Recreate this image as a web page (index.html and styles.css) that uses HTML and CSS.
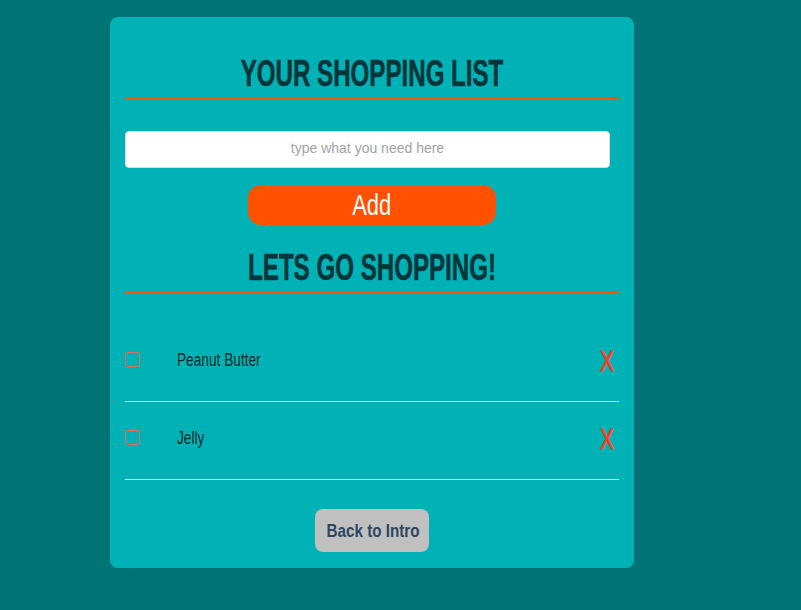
FILE: index.html
```html
<!DOCTYPE html>
<html>
<head>
<meta charset="utf-8">
<link rel="stylesheet" href="styles.css">
</head>
<body>
<div class="card">
  <h1 class="title"><span class="squeeze">YOUR SHOPPING LIST</span></h1>
  <input class="entry" type="text" placeholder="type what you need here">
  <button class="add"><span class="add-label">Add</span></button>
  <h1 class="title second"><span class="squeeze">LETS GO SHOPPING!</span></h1>
  <ul class="list">
    <li class="item"><span class="box"></span><span class="name">Peanut Butter</span><span class="del">X</span></li>
    <li class="item"><span class="box"></span><span class="name">Jelly</span><span class="del">X</span></li>
  </ul>
  <div class="foot"><button class="back"><span class="back-label">Back to Intro</span></button></div>
</div>
</body>
</html>
```
FILE: styles.css
```css
html, body {
  margin: 0;
  padding: 0;
  background: #007474;
  font-family: "Liberation Sans", Arial, sans-serif;
}
body {
  padding-top: 17px;
  padding-left: 110px;
}
.card {
  width: 524px;
  height: 551px;
  box-sizing: border-box;
  background: #00b2b5;
  border-radius: 8px;
  padding: 37px 15px 0 15px;
  display: flex;
  flex-direction: column;
}
.title {
  margin: 0;
  font-size: 36px;
  line-height: 40px;
  height: 40px;
  font-weight: bold;
  color: #00363a;
  text-align: center;
  border-bottom: 2px solid #ff5000;
  padding-bottom: 3px;
  white-space: nowrap;
}
.squeeze {
  display: inline-block;
  transform: scaleX(0.67);
  transform-origin: center;
  -webkit-text-stroke: 0.6px #00363a;
}
.entry {
  margin: 32px 0 0 0;
  width: 485px;
  height: 37px;
  box-sizing: border-box;
  border: 1px solid #dcdcdc;
  border-radius: 4px;
  background: #fff;
  text-align: center;
  font-family: "Liberation Sans", Arial, sans-serif;
  font-size: 14px;
  padding: 0 0 4px 0;
  outline: none;
}
.entry::placeholder {
  color: #a3a3a3;
}
.add {
  align-self: center;
  margin: 17px 0 0 0;
  width: 248px;
  height: 40px;
  border: none;
  border-radius: 13px;
  background: #ff5100;
  color: #fff;
  font-family: "Liberation Sans", Arial, sans-serif;
  font-size: 30px;
  line-height: 40px;
  padding: 0 0 2px 0;
}
.add-label {
  display: inline-block;
  transform: scaleX(0.73);
}
.second {
  margin-top: 23px;
}
.list {
  list-style: none;
  margin: 31px 0 0 0;
  padding: 0;
}
.item {
  display: flex;
  align-items: center;
  height: 77px;
  border-bottom: 1px solid #d8f4f4;
}
.box {
  flex: 0 0 auto;
  width: 15px;
  height: 15px;
  box-sizing: border-box;
  border: 1px solid #d9725c;
  border-radius: 2px;
  margin-top: -6px;
}
.name {
  flex: 1;
  margin-left: 37px;
  font-size: 18px;
  line-height: 20px;
  color: #0a2a2a;
  margin-top: -6px;
  transform: scaleX(0.76);
  transform-origin: left center;
}
.del {
  flex: 0 0 auto;
  color: #ff3b1f;
  font-size: 30px;
  line-height: 30px;
  margin-right: 2px;
  margin-top: -4px;
  transform: scaleX(0.7);
  -webkit-text-stroke: 0.8px #ff3b1f;
}
.foot {
  display: flex;
  justify-content: center;
  margin-top: 29px;
}
.back {
  width: 114px;
  height: 43px;
  border: none;
  border-radius: 8px;
  background: #c0c0c0;
  color: #2e4560;
  font-family: "Liberation Sans", Arial, sans-serif;
  font-weight: bold;
  font-size: 19px;
  padding: 0;
  white-space: nowrap;
}
.back-label {
  display: inline-block;
  transform: scaleX(0.8);
}
```
